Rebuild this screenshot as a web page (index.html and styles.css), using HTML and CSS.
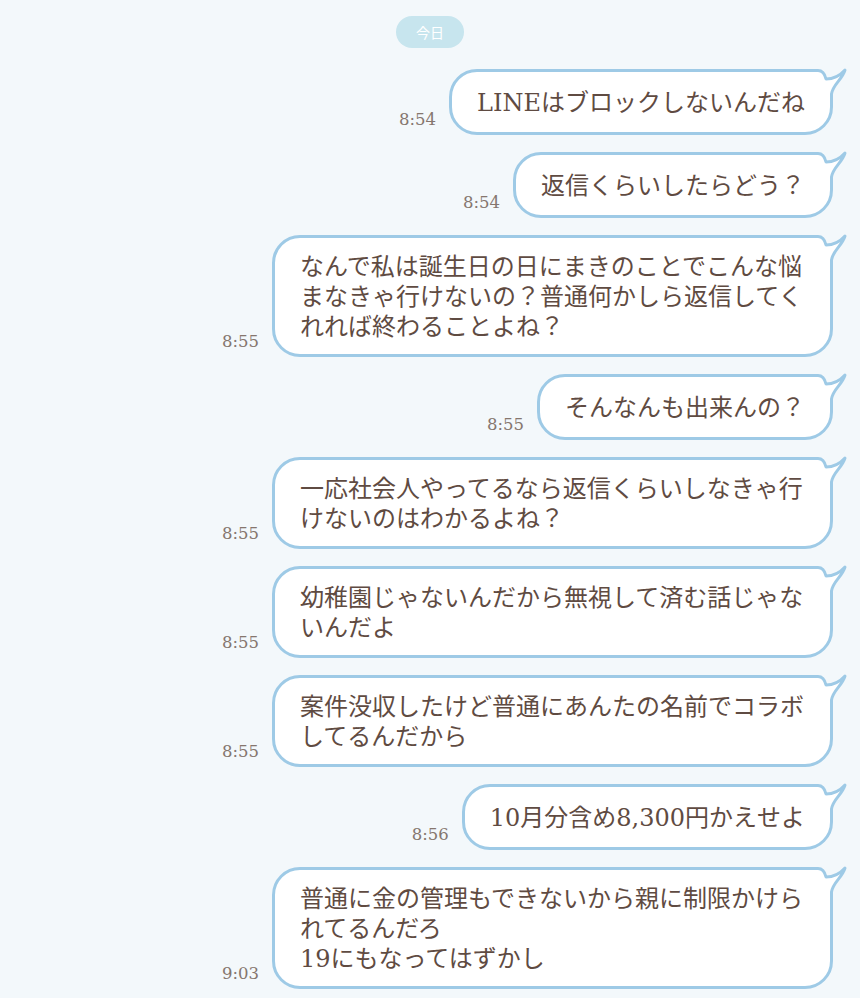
FILE: index.html
```html
<!DOCTYPE html>
<html lang="ja">
<head>
    <meta charset="UTF-8">
    <meta name="viewport" content="width=device-width, initial-scale=1.0">
    <title>トーク</title>
    <link rel="stylesheet" href="styles.css">
</head>
<body>
    <!-- トーク画面 -->
    <main class="chat">
        <div class="date">今日</div>

        <div class="msg">
            <span class="time">8:54</span>
            <div class="bubble">
                <p class="text">LINEはブロックしないんだね</p>
                <svg class="tail" viewBox="0 0 60 45"><path class="tail-fill" d="M12,6.5 H25 Q31,6.5 33,15 Q44,15 52,6 C49,16 40,20 38.5,30 V34 H12 Z"/><path class="tail-line" d="M10,6.5 H25 Q31,6.5 33,15 Q44,15 52,6 C49,16 40,20 38.5,30 V40"/></svg>
            </div>
        </div>

        <div class="msg">
            <span class="time">8:54</span>
            <div class="bubble">
                <p class="text">返信くらいしたらどう？</p>
                <svg class="tail" viewBox="0 0 60 45"><path class="tail-fill" d="M12,6.5 H25 Q31,6.5 33,15 Q44,15 52,6 C49,16 40,20 38.5,30 V34 H12 Z"/><path class="tail-line" d="M10,6.5 H25 Q31,6.5 33,15 Q44,15 52,6 C49,16 40,20 38.5,30 V40"/></svg>
            </div>
        </div>

        <div class="msg">
            <span class="time">8:55</span>
            <div class="bubble">
                <p class="text">なんで私は誕生日の日にまきのことでこんな悩まなきゃ行けないの？普通何かしら返信してくれれば終わることよね？</p>
                <svg class="tail" viewBox="0 0 60 45"><path class="tail-fill" d="M12,6.5 H25 Q31,6.5 33,15 Q44,15 52,6 C49,16 40,20 38.5,30 V34 H12 Z"/><path class="tail-line" d="M10,6.5 H25 Q31,6.5 33,15 Q44,15 52,6 C49,16 40,20 38.5,30 V40"/></svg>
            </div>
        </div>

        <div class="msg">
            <span class="time">8:55</span>
            <div class="bubble">
                <p class="text">そんなんも出来んの？</p>
                <svg class="tail" viewBox="0 0 60 45"><path class="tail-fill" d="M12,6.5 H25 Q31,6.5 33,15 Q44,15 52,6 C49,16 40,20 38.5,30 V34 H12 Z"/><path class="tail-line" d="M10,6.5 H25 Q31,6.5 33,15 Q44,15 52,6 C49,16 40,20 38.5,30 V40"/></svg>
            </div>
        </div>

        <div class="msg">
            <span class="time">8:55</span>
            <div class="bubble">
                <p class="text">一応社会人やってるなら返信くらいしなきゃ行けないのはわかるよね？</p>
                <svg class="tail" viewBox="0 0 60 45"><path class="tail-fill" d="M12,6.5 H25 Q31,6.5 33,15 Q44,15 52,6 C49,16 40,20 38.5,30 V34 H12 Z"/><path class="tail-line" d="M10,6.5 H25 Q31,6.5 33,15 Q44,15 52,6 C49,16 40,20 38.5,30 V40"/></svg>
            </div>
        </div>

        <div class="msg">
            <span class="time">8:55</span>
            <div class="bubble">
                <p class="text">幼稚園じゃないんだから無視して済む話じゃないんだよ</p>
                <svg class="tail" viewBox="0 0 60 45"><path class="tail-fill" d="M12,6.5 H25 Q31,6.5 33,15 Q44,15 52,6 C49,16 40,20 38.5,30 V34 H12 Z"/><path class="tail-line" d="M10,6.5 H25 Q31,6.5 33,15 Q44,15 52,6 C49,16 40,20 38.5,30 V40"/></svg>
            </div>
        </div>

        <div class="msg">
            <span class="time">8:55</span>
            <div class="bubble">
                <p class="text">案件没収したけど普通にあんたの名前でコラボしてるんだから</p>
                <svg class="tail" viewBox="0 0 60 45"><path class="tail-fill" d="M12,6.5 H25 Q31,6.5 33,15 Q44,15 52,6 C49,16 40,20 38.5,30 V34 H12 Z"/><path class="tail-line" d="M10,6.5 H25 Q31,6.5 33,15 Q44,15 52,6 C49,16 40,20 38.5,30 V40"/></svg>
            </div>
        </div>

        <div class="msg">
            <span class="time">8:56</span>
            <div class="bubble">
                <p class="text">10月分含め8,300円かえせよ</p>
                <svg class="tail" viewBox="0 0 60 45"><path class="tail-fill" d="M12,6.5 H25 Q31,6.5 33,15 Q44,15 52,6 C49,16 40,20 38.5,30 V34 H12 Z"/><path class="tail-line" d="M10,6.5 H25 Q31,6.5 33,15 Q44,15 52,6 C49,16 40,20 38.5,30 V40"/></svg>
            </div>
        </div>

        <div class="msg">
            <span class="time">9:03</span>
            <div class="bubble">
                <p class="text">普通に金の管理もできないから親に制限かけられてるんだろ<br>19にもなってはずかし</p>
                <svg class="tail" viewBox="0 0 60 45"><path class="tail-fill" d="M12,6.5 H25 Q31,6.5 33,15 Q44,15 52,6 C49,16 40,20 38.5,30 V34 H12 Z"/><path class="tail-line" d="M10,6.5 H25 Q31,6.5 33,15 Q44,15 52,6 C49,16 40,20 38.5,30 V40"/></svg>
            </div>
        </div>
    </main>
</body>
</html>
```

FILE: styles.css
```css
/* Allgemein */
body {
    margin: 0;
    padding: 0;
    background-color: #f3f8fb;
    font-family: "DejaVu Serif", "Noto Sans CJK JP", serif;
    color: #5f4b42;
}

/* Trek-Bereich */
.chat {
    display: flex;
    flex-direction: column;
    gap: 17px;
    padding: 16px 27px 20px 27px;
}

.date {
    align-self: center;
    height: 32px;
    line-height: 32px;
    padding: 0 20px;
    margin-bottom: 4px;
    border-radius: 16px;
    background-color: #c7e5ee;
    color: #fff;
    font-family: "Noto Sans CJK JP", sans-serif;
    font-size: 14px;
}

/* Nachricht */
.msg {
    display: flex;
    justify-content: flex-end;
    align-items: flex-end;
    gap: 13px;
}

.time {
    flex-shrink: 0;
    font-size: 16.5px;
    line-height: 20px;
    margin-bottom: 5px;
    color: #85766e;
}

.bubble {
    position: relative;
    display: flex;
    align-items: center;
    box-sizing: border-box;
    max-width: 561px;
    min-height: 66px;
    padding: 14px 25px 12px 25px;
    border: 3px solid #9ecae6;
    border-radius: 28px;
    background-color: #fff;
}

.text {
    margin: 0;
    font-size: 24px;
    line-height: 30px;
}

/* Sprechblasen-Spitze */
.tail {
    position: absolute;
    top: -8px;
    right: -23px;
    width: 60px;
    height: 45px;
    overflow: visible;
}

.tail-fill {
    fill: #fff;
}

.tail-line {
    fill: none;
    stroke: #9ecae6;
    stroke-width: 3;
    stroke-linecap: round;
    stroke-linejoin: round;
}
```
